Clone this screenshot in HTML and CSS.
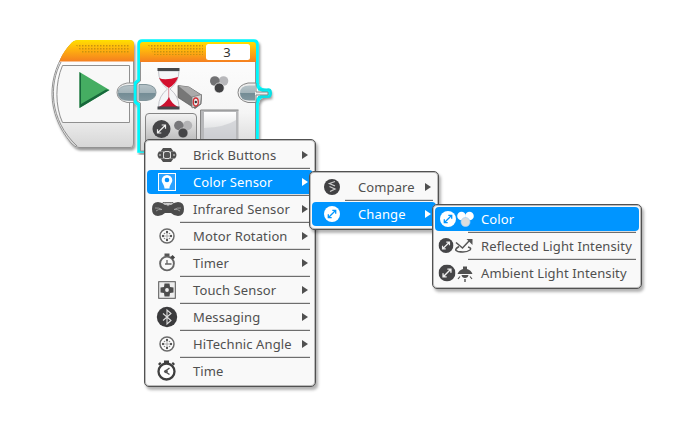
FILE: index.html
```
<!DOCTYPE html>
<html lang="en">
<head>
    <meta charset="utf-8">
    <title>Wait Block - Mode Selector</title>
    <link rel="stylesheet" href="styles.css">
</head>
<body>
    <main class="canvas">
        <svg class="blocks" width="240" height="125" viewBox="45 30 240 125">
            <defs>
                <linearGradient id="orange" x1="0" y1="0" x2="0" y2="1">
                    <stop offset="0" stop-color="#ffe000"/>
                    <stop offset=".4" stop-color="#ffb60d"/>
                    <stop offset="1" stop-color="#f57f20"/>
                </linearGradient>
                <linearGradient id="shell" x1="0" y1="0" x2="0" y2="1">
                    <stop offset="0" stop-color="#fff"/>
                    <stop offset=".65" stop-color="#f5f5f5"/>
                    <stop offset="1" stop-color="#d6d6d6"/>
                </linearGradient>
                <linearGradient id="plug" x1="0" y1="0" x2="0" y2="1">
                    <stop offset="0" stop-color="#b6c3c8"/>
                    <stop offset=".5" stop-color="#a3b3b9"/>
                    <stop offset=".52" stop-color="#738c95"/>
                    <stop offset="1" stop-color="#82979f"/>
                </linearGradient>
                <linearGradient id="mode" x1="0" y1="0" x2="0" y2="1">
                    <stop offset="0" stop-color="#f2f2f2"/>
                    <stop offset="1" stop-color="#aaa"/>
                </linearGradient>
                <linearGradient id="slot" x1="0" y1="0" x2="0" y2="1">
                    <stop offset="0" stop-color="#fff"/>
                    <stop offset="1" stop-color="#cfd1d4"/>
                </linearGradient>
                <pattern id="dots" x="76" y="45" width="3" height="3" patternUnits="userSpaceOnUse">
                    <rect width="1.500" height="1.500" fill="#c9920f"/>
                </pattern>
                <filter id="soft" x="-10%" y="-10%" width="120%" height="125%">
                    <feDropShadow dx="1.500" dy="2.500" stdDeviation="1.300" flood-color="#000" flood-opacity=".4"/>
                </filter>
            </defs>

            <!-- start block -->
            <g>
                <path d="M78 40.500H130Q133.500 40.500 133.500 44V143Q133.500 147.500 130 147.500H79Q75 147.500 71 143C46 113 46 76 69 46Q73 40.500 78 40.500Z" fill="url(#shell)" stroke="#929292" filter="url(#soft)"/>
                <path d="M78 40H130Q134 40 134 44V61.500H59.500C62 54 66 49 69.500 45Q73 40 78 40Z" fill="url(#orange)"/>
                <path d="M77 146C49 120 49 84 61 62" fill="none" stroke="#909090"/>
                <path d="M62.500 65.500H129.500V122.500H62.500C55 106 55 83 62.500 65.500Z" fill="#f8f8f8" stroke="#909090"/>
                <path d="M76 45h53v8H82z" fill="url(#dots)"/>
                <path d="M79.500 72L109.500 90L79.500 108Z" fill="#45ad62"/>
                <path d="M79.500 108L109.500 90L106 89.500L81 104V73.500L79.500 72Z" fill="#17683b"/>
                <path d="M134 83h-7q-10 2-10 9.500t10 10h7z" fill="#eee" stroke="#929292"/>
                <path d="M134 85.500h-5q-11 0-11 7.500t11 7.500h5z" fill="url(#plug)" stroke="#84979d" stroke-width=".7"/>
            </g>

            <!-- wait block, selected -->
            <g>
                <path d="M142 41H254Q257 41 257 44V83Q258 91 269 91V95Q258 95 257 103V151H139V105L135.500 102V83L139 80V44Q139 41 142 41Z" fill="url(#shell)" stroke="#00f6fb" stroke-width="3.500" filter="url(#soft)"/>
                <path d="M143 42.500H253Q255.500 42.500 255.500 45V151H140.500V103L137 101V84L140.500 81V45Q140.500 42.500 143 42.500Z" fill="url(#shell)" stroke="#929292"/>
                <path d="M143 42H253Q256 42 256 45V62H140V45Q140 42 143 42Z" fill="url(#orange)"/>
                <path d="M148 45h55v10h-49z" fill="url(#dots)"/>
                <rect x="206" y="44" width="44" height="16" rx="2.500" fill="#fff"/>
                <text class="port" x="227" y="56.500">3</text>
                <path d="M139 84.500h7q10 1 10 8t-10 8h-7z" fill="url(#plug)" stroke="#82959b"/>
                <path d="M256 83h-8q-10 2-10 9.500t10 10h8V95h12v-3h-12z" fill="#ededed" stroke="#858585"/>
                <path d="M255 85.500h-6q-9 0-9 7.500t9 7.500h6z" fill="url(#plug)"/>
                <path d="M258 89.500H267q4-1 4 3.500t-4 4H258" fill="none" stroke="#0adfe4" stroke-width="2"/>

                <!-- hourglass -->
                <path d="M158.500 71H179Q179 82 170 89Q179 96 179 107H158.500Q158.500 96 167.500 89Q158.500 82 158.500 71Z" fill="#f4f6f8" stroke="#c4c4ca"/>
                <path d="M159 78Q165 81 178 77Q176 84 168.800 88Q162 84 159 78Z" fill="#d3102e"/>
                <path d="M168.700 88V99" stroke="#d78e99"/>
                <path d="M169 97Q171 103 178 107H159Q166 103 169 97Z" fill="#cc1130"/>
                <path d="M157.500 68h22v3h-22zM157.500 106.500h22v3h-22z" fill="#45474b"/>

                <!-- color sensor -->
                <path d="M178 85.500L189 87L201.500 95L201 104L195 108.500L178 97.500Z" fill="#777" stroke="#555" stroke-width=".7"/>
                <path d="M178 85.500L189 87L201 95L192 97Z" fill="#aaa"/>
                <path d="M192 97L201.500 94.500L200.500 104L192 108Z" fill="#d5d5d5" stroke="#777" stroke-width=".7"/>
                <ellipse cx="195.800" cy="102" rx="2.500" ry="4" fill="#eee" stroke="#d02f35" stroke-width="1.300"/>
                <circle cx="195.800" cy="102" r="1.200" fill="#333"/>

                <circle cx="223.500" cy="81" r="4.800" fill="#b8b8bb"/>
                <circle cx="214.800" cy="81" r="4.800" fill="#727274"/>
                <circle cx="219.200" cy="88" r="5" fill="#414143" stroke="#f7f7f7" stroke-width=".7"/>

                <!-- mode button and value slot -->
                <path d="M145.500 150V117q0-3.500 3.500-3.500h44q3.500 0 3.500 3.500V150z" fill="url(#mode)" stroke="#858585"/>
                <circle cx="161.500" cy="129" r="9" fill="#454547"/>
                <path d="M157.500 133L165.500 125M161.700 125H165.500V128.800M157.500 129.200V133H161.300" fill="none" stroke="#eee" stroke-width="1.200"/>
                <circle cx="187.500" cy="125.500" r="4.700" fill="#b4b4b6"/>
                <circle cx="178.800" cy="125.500" r="4.700" fill="#77777a"/>
                <circle cx="183" cy="133" r="5" fill="#454547" stroke="#ccc" stroke-width=".7"/>
                <rect x="200.500" y="110" width="38" height="34" fill="#b7b8ba"/>
                <path d="M200.500 144V110H238.500" fill="none" stroke="#858585"/>
                <rect x="204" y="112" width="32" height="28" fill="url(#slot)"/>
                <path d="M204 128Q226 127 236 120V140H204Z" fill="#c9cbcf" opacity=".65"/>
            </g>
        </svg>
    </main>

    <!-- shared icons -->
    <svg class="defs" width="0" height="0">
        <symbol id="i-motor" viewBox="0 0 16 16">
            <circle cx="8" cy="8" r="7" fill="#fff" stroke="#6c6c6c" stroke-width="1.500"/>
            <path d="M8 4.500v7M4.500 8h7" stroke="#999" stroke-width=".8"/>
            <g fill="#555"><circle cx="8" cy="4" r="1.200"/><circle cx="8" cy="12" r="1.200"/><circle cx="4" cy="8" r="1.200"/><circle cx="12" cy="8" r="1.200"/></g>
            <g fill="#888"><circle cx="5.500" cy="5.500" r=".8"/><circle cx="10.500" cy="5.500" r=".8"/><circle cx="5.500" cy="10.500" r=".8"/><circle cx="10.500" cy="10.500" r=".8"/></g>
        </symbol>
        <symbol id="i-change" viewBox="0 0 16 16">
            <circle class="disc" cx="8" cy="8" r="8"/>
            <path class="mark" d="M4.500 11.500L11.500 4.500M8.300 4.300h3.400v3.400M4.300 8.300v3.400h3.400"/>
        </symbol>
    </svg>

    <ul class="menu menu-sensors">
        <li class="item">
            <svg class="icon" viewBox="0 0 36 24"><path d="M14 5h8l2.500 3.500h-13zM14 19h8l2.500-3.500h-13z" fill="#505050"/><path d="M10 8.500h4.500v7H10q-3-3.500 0-7zM21.500 8.500H26q3 3.500 0 7h-4.500z" fill="#505050"/><rect x="15" y="9" width="6" height="6" rx="1.500" fill="#555"/><path d="M14.500 9v6M21.500 9v6M10 12h2M24 12h2M16 8.500h4M16 15.500h4" stroke="#ddd"/></svg>
            <span class="label">Brick Buttons</span><i class="arrow"></i>
        </li>
        <li class="sep"></li>
        <li class="item active">
            <svg class="icon" viewBox="0 0 36 24"><rect x="9.500" y="3.500" width="17" height="17" fill="#2ba2ff" stroke="#fff"/><path d="M18 5a5.300 5.300 0 0 1 5.300 5.300c0 3-2.800 4.200-2.800 8.200h-5c0-4-2.800-5.200-2.800-8.200A5.300 5.300 0 0 1 18 5z" fill="#fff"/><circle cx="18" cy="10" r="2.300" fill="#0090ff"/></svg>
            <span class="label">Color Sensor</span><i class="arrow"></i>
        </li>
        <li class="sep"></li>
        <li class="item">
            <svg class="icon" viewBox="0 0 36 24"><path d="M14 5.500h10l1 3h-12z" fill="#ccc" stroke="#555" stroke-width=".8"/><path d="M9 5q3 0 7 3h6q4-3 7-3q6 0 6 7t-6 7q-4 0-7-3h-6q-3 3-7 3q-6 0-6-7t6-7z" fill="#4c4c4c"/><path d="M6 11q4-.5 7 1.500q-4-.5-6 1.500M32 11q-4-.5-7 1.500q4-.5 6 1.500M15.500 6l3.500 3l3.500-3" fill="none" stroke="#aaa" stroke-width=".8"/></svg>
            <span class="label">Infrared Sensor</span><i class="arrow"></i>
        </li>
        <li class="sep"></li>
        <li class="item">
            <svg class="icon" viewBox="0 0 36 24"><use href="#i-motor" x="10" y="4" width="16" height="16"/></svg>
            <span class="label">Motor Rotation</span><i class="arrow"></i>
        </li>
        <li class="sep"></li>
        <li class="item">
            <svg class="icon" viewBox="0 0 36 24"><circle cx="18" cy="12.500" r="6.900" fill="none" stroke="#666" stroke-width="1.900"/><path d="M15.500 2.500h5V5h-5z" fill="#555"/><path d="M22.500 5l2.500 2.500" stroke="#444" stroke-width="3"/><path d="M18 9v4M16 13h6.500" fill="none" stroke="#666" stroke-width="1.300"/></svg>
            <span class="label">Timer</span><i class="arrow"></i>
        </li>
        <li class="sep"></li>
        <li class="item">
            <svg class="icon" viewBox="0 0 36 24"><rect x="9.700" y="3.700" width="16.600" height="16.600" fill="#eee" stroke="#555"/><path d="M15.500 5.500h5l.5 3.500l3.500.5v5l-3.500.5l-.5 3.500h-5l-.5-3.500l-3.500-.5v-5l3.500-.5z" fill="#4c4c4c"/><circle cx="18" cy="12" r="1.900" fill="#eee"/></svg>
            <span class="label">Touch Sensor</span><i class="arrow"></i>
        </li>
        <li class="sep"></li>
        <li class="item">
            <svg class="icon" viewBox="0 0 36 24"><circle cx="18" cy="12" r="10.200" fill="#3b3b3d"/><path d="M14 8.500l8 7L18 19V5l4 3.500l-8 7" fill="none" stroke="#ddd" stroke-width="1.100"/></svg>
            <span class="label">Messaging</span><i class="arrow"></i>
        </li>
        <li class="sep"></li>
        <li class="item">
            <svg class="icon" viewBox="0 0 36 24"><use href="#i-motor" x="10" y="4" width="16" height="16"/></svg>
            <span class="label">HiTechnic Angle</span><i class="arrow"></i>
        </li>
        <li class="sep"></li>
        <li class="item">
            <svg class="icon" viewBox="0 0 36 24"><circle cx="17.500" cy="12.500" r="8" fill="#fff" stroke="#3f3f3f" stroke-width="2.300"/><path d="M15 1.500h5v3h-5zM9 5l2-2l1.500 1.500l-2 2zM26 5l-2-2l-1.500 1.500l2 2z" fill="#3f3f3f"/><path d="M20.500 9L16 12.500l4.500 3" fill="none" stroke="#555" stroke-width="1.500"/><circle cx="17" cy="12.500" r="1.800" fill="#555"/></svg>
            <span class="label">Time</span>
        </li>
    </ul>

    <ul class="menu menu-kind">
        <li class="item">
            <svg class="icon" viewBox="0 0 36 24"><circle cx="18" cy="12" r="8" fill="#414143"/><path d="M21 6.500l-5.500 2l5.500 2.500M15.500 11.500l5.500 2.500l-5 2.500" fill="none" stroke="#ccc" stroke-width="1.300"/></svg>
            <span class="label">Compare</span><i class="arrow"></i>
        </li>
        <li class="sep"></li>
        <li class="item active">
            <svg class="icon" viewBox="0 0 36 24"><use href="#i-change" x="10" y="4" width="16" height="16"/></svg>
            <span class="label">Change</span><i class="arrow"></i>
        </li>
    </ul>

    <ul class="menu menu-mode">
        <li class="item active">
            <svg class="icon" viewBox="0 0 36 24"><use href="#i-change" x="3" y="4" width="16" height="16"/><circle cx="24.500" cy="9" r="4.300" fill="#fff"/><circle cx="32.500" cy="9" r="4.300" fill="#fff"/><circle cx="28.500" cy="15" r="4.500" fill="#ddd" stroke="#a8d3f8" stroke-width=".7"/></svg>
            <span class="label">Color</span>
        </li>
        <li class="sep"></li>
        <li class="item">
            <svg class="icon" viewBox="0 0 36 24"><use href="#i-change" x="1.500" y="4" width="15" height="15"/><path d="M22 12.500q-6 3.500-1 5q8 1.500 12-1.500q2-2-2-3" fill="none" stroke="#555" stroke-width="1.500"/><path d="M19 8.500l6.500 5.500l7-7.500" fill="none" stroke="#555" stroke-width="1.500"/><path d="M29.500 5h6v6z" fill="#555"/></svg>
            <span class="label">Reflected Light Intensity</span>
        </li>
        <li class="sep"></li>
        <li class="item">
            <svg class="icon" viewBox="0 0 36 24"><use href="#i-change" x="1.500" y="3.500" width="17" height="17"/><path d="M26 5.500h4V8q4 1 5.500 5h-15q1.500-4 5.500-5z" fill="#505050"/><path d="M24.500 14h7q-.5 3-3.500 3t-3.500-3zM27.300 18h1.400v3h-1.400z" fill="#505050"/><path d="M23 15.500L21 18M33 15.500l2 2.500" stroke="#555" stroke-width="1.200"/></svg>
            <span class="label">Ambient Light Intensity</span>
        </li>
    </ul>
</body>
</html>
```
FILE: styles.css
```
body {
    margin: 0;
    width: 695px;
    height: 434px;
    position: relative;
    overflow: hidden;
    background: #fff;
    font-family: "Noto Sans", Verdana, sans-serif;
    font-size: 13px;
    color: #505050;
}
.canvas {
    padding: 30px 0 0 45px;
}
.blocks {
    display: block;
}
.defs {
    position: absolute;
}
.port {
    font-size: 13px;
    fill: #333;
    text-anchor: middle;
}

/* popup menus */
.menu {
    position: absolute;
    box-sizing: border-box;
    margin: 0;
    padding: 2px 2px 1px;
    list-style: none;
    background: #f9f9f9;
    border: 1px solid #515151;
    border-radius: 5px;
    box-shadow: inset 0 0 0 1px #bbb, 2px 3px 3px rgba(0, 0, 0, 0.3);
}
.menu-sensors {
    left: 144px;
    top: 139px;
    width: 172px;
    height: 248px;
}
.menu-kind {
    left: 309px;
    top: 171px;
    width: 130px;
    height: 59px;
}
.menu-mode {
    left: 432px;
    top: 204px;
    width: 210px;
    height: 85px;
    padding-top: 1px;
}
.item {
    display: flex;
    align-items: center;
    height: 24px;
    margin: 1px 0;
    padding: 0 5px 0 2px;
    border-radius: 4px;
}
.active {
    --disc: #fff;
    --mark: #0095ff;
    background: #0095ff;
    color: #fff;
}
.sep {
    height: 1px;
    margin: 0 3px 0 33px;
    background: #6e6e6e;
    box-shadow: 0 -1px 0 #ddd;
}
.icon {
    flex: none;
    width: 36px;
    height: 24px;
    margin-right: 8px;
    overflow: visible;
}
.label {
    flex: 1;
    line-height: 24px;
    white-space: nowrap;
    letter-spacing: 0.12px;
}
.arrow {
    border: 4px solid transparent;
    border-left: 6px solid #505050;
    border-right: 0;
}
.active .arrow {
    border-left-color: #fff;
}
.disc {
    fill: var(--disc, #454547);
}
.mark {
    fill: none;
    stroke: var(--mark, #eee);
    stroke-width: 1.3;
}
```
